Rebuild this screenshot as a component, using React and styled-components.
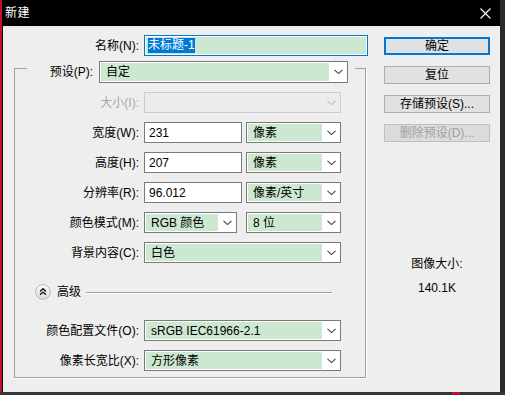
import React from "react";
import styled, { createGlobalStyle } from "styled-components";

const Global = createGlobalStyle`
  html, body { margin: 0; padding: 0; background: #2b2b2b; overflow: hidden; }
  * { box-sizing: border-box; }
`;

const FONT = `"Liberation Sans", "Noto Sans CJK SC", sans-serif`;

const Screen = styled.div`
  width: 505px;
  height: 395px;
  display: flex;
  flex-direction: column;
  font-family: ${FONT};
  font-size: 12px;
  line-height: 16px;
  color: #000;
`;

const MainRow = styled.div`
  flex: 1;
  display: flex;
  min-height: 0;
`;

const RedEdge = styled.div`
  width: 2px;
  background: #c4102d;
`;

const RightEdge = styled.div`
  flex: 1;
  background: #2b2b2b;
`;

const Taskbar = styled.div`
  height: 3px;
  background: #353535;
  display: flex;
  justify-content: flex-end;
  padding-right: 45px;
`;

const TaskMark = styled.div`
  width: 8px;
  background: #c4102d;
`;

const Window = styled.div`
  width: 498px;
  display: flex;
  flex-direction: column;
  border-left: 1px solid #000;
`;

const TitleBar = styled.div`
  height: 26px;
  background: #000;
  display: flex;
  align-items: center;
  justify-content: space-between;
  padding: 0 9px 0 2px;
  color: #fff;
`;

const TitleText = styled.span`
  font-size: 12px;
  letter-spacing: 0.5px;
`;

const Body = styled.div`
  flex: 1;
  background: #eeeeee;
  display: flex;
`;

const LeftCol = styled.div`
  width: 381px;
  padding-top: 9px;
  display: flex;
  flex-direction: column;
`;

const NameRow = styled.div`
  display: grid;
  grid-template-columns: 136px 224px;
  column-gap: 5px;
  align-items: center;
  height: 21px;
`;

const Label = styled.span`
  text-align: right;
  white-space: nowrap;
  color: ${(p) => (p.$disabled ? "#a8a8a8" : "#000")};
`;

const NameInput = styled.div`
  height: 21px;
  border: 1px solid #0078d7;
  padding: 1px;
  background: #fff;
  display: flex;
`;

const NameFill = styled.div`
  flex: 1;
  background: #cde8d0;
  padding-left: 2px;
  display: flex;
  align-items: center;
`;

const Selected = styled.span`
  background: #0078d7;
  color: #fff;
  line-height: 15px;
`;

const GroupBox = styled.div`
  margin: 12px 0 0 11px;
  width: 352px;
  border: 1px solid #a0a0a0;
  border-top: none;
  padding-bottom: 6px;
  box-shadow: 1px 1px 0 #fff;
  display: flex;
  flex-direction: column;
`;

const Header = styled.div`
  height: 22px;
  margin-top: -7px;
  display: flex;
  align-items: center;
`;

const HeaderLine = styled.div`
  align-self: flex-start;
  margin-top: 7px;
  height: 1px;
  background: #a0a0a0;
  width: ${(p) => (p.$w ? `${p.$w}px` : "auto")};
  flex: ${(p) => (p.$w ? "none" : "1")};
`;

const HeaderLabel = styled(Label)`
  width: 66px;
  margin-right: 6px;
`;

const HeaderGap = styled.div`
  width: 7px;
`;

const Fields = styled.div`
  display: flex;
  flex-direction: column;
  gap: 9px;
  margin-top: ${(p) => p.$mt || 0}px;
`;

const FieldRow = styled.div`
  display: grid;
  grid-template-columns: 124px auto;
  column-gap: 5px;
  align-items: center;
  height: 21px;
`;

const Pair = styled.div`
  display: flex;
  gap: ${(p) => p.$gap}px;
`;

const TextBox = styled.div`
  width: ${(p) => p.$w}px;
  height: 21px;
  border: 1px solid #7a7a7a;
  background: #fff;
  padding-left: 4px;
  display: flex;
  align-items: center;
`;

const Select = styled.div`
  width: ${(p) => p.$w}px;
  height: ${(p) => p.$h || 21}px;
  border: 1px solid ${(p) => (p.$disabled ? "#cccccc" : "#7a7a7a")};
  background: ${(p) => (p.$disabled ? "#ececec" : "#fff")};
  display: flex;
`;

const SelectValue = styled.div`
  flex: 1;
  margin: 1px 0 1px 1px;
  padding-left: 5px;
  background: ${(p) => (p.$disabled ? "#ececec" : "#cde8d0")};
  display: flex;
  align-items: center;
  white-space: nowrap;
`;

const SelectArrow = styled.div`
  width: 18px;
  display: flex;
  align-items: center;
  justify-content: center;
`;

const AdvancedRow = styled.div`
  height: 16px;
  margin-top: 21px;
  padding-left: 20px;
  display: flex;
  align-items: center;
`;

const AdvText = styled.span`
  margin-left: 6px;
`;

const AdvLine = styled.div`
  width: 246px;
  margin-left: 5px;
  height: 1px;
  background: #a0a0a0;
  box-shadow: 0 1px 0 #fff;
`;

const RightCol = styled.div`
  width: 106px;
  padding-top: 11px;
  display: flex;
  flex-direction: column;
`;

const Buttons = styled.div`
  display: flex;
  flex-direction: column;
  gap: 11px;
`;

const Button = styled.div`
  height: 18px;
  background: ${(p) => (p.$disabled ? "#dcdcdc" : "#e1e1e1")};
  border: ${(p) =>
    p.$primary ? "2px solid #0078d7" : `1px solid ${p.$disabled ? "#bfbfbf" : "#adadad"}`};
  color: ${(p) => (p.$disabled ? "#a0a0a0" : "#000")};
  display: flex;
  align-items: center;
  justify-content: center;
  white-space: nowrap;
`;

const Info = styled.div`
  margin-top: 114px;
  display: flex;
  flex-direction: column;
  align-items: center;
  gap: 8px;
`;

function Chevron({ disabled }) {
  return (
    <svg width="9" height="6" viewBox="0 0 9 6">
      <path
        d="M0.5 0.8 L4.5 4.6 L8.5 0.8"
        fill="none"
        stroke={disabled ? "#bdbdbd" : "#404040"}
        strokeWidth="1.1"
      />
    </svg>
  );
}

function Dropdown({ w, h, value, disabled }) {
  return (
    <Select $w={w} $h={h} $disabled={disabled}>
      <SelectValue $disabled={disabled}>{value}</SelectValue>
      <SelectArrow>
        <Chevron disabled={disabled} />
      </SelectArrow>
    </Select>
  );
}

function CloseIcon() {
  return (
    <svg width="11" height="11" viewBox="0 0 11 11">
      <path d="M0.5 0.5 L10.5 10.5 M10.5 0.5 L0.5 10.5" stroke="#fff" strokeWidth="1.1" />
    </svg>
  );
}

function AdvIcon() {
  return (
    <svg width="16" height="16" viewBox="0 0 16 16">
      <defs>
        <linearGradient id="advg" x1="0" y1="0" x2="0" y2="1">
          <stop offset="0" stopColor="#ffffff" />
          <stop offset="1" stopColor="#dedede" />
        </linearGradient>
      </defs>
      <circle cx="8" cy="8" r="7.3" fill="url(#advg)" stroke="#b5b5b5" strokeWidth="1" />
      <path d="M5 7.5 L8 4.8 L11 7.5 M5 10.8 L8 8.1 L11 10.8" fill="none" stroke="#111" strokeWidth="1.4" />
    </svg>
  );
}

export default function App() {
  return (
    <Screen>
      <Global />
      <MainRow>
        <RedEdge />
        <Window>
          <TitleBar>
            <TitleText>新建</TitleText>
            <CloseIcon />
          </TitleBar>
          <Body>
            <LeftCol>
              <NameRow>
                <Label>名称(N):</Label>
                <NameInput>
                  <NameFill>
                    <Selected>未标题-1</Selected>
                  </NameFill>
                </NameInput>
              </NameRow>
              <GroupBox>
                <Header>
                  <HeaderLine $w={12} />
                  <HeaderLabel>预设(P):</HeaderLabel>
                  <Dropdown w={249} h={22} value="自定" />
                  <HeaderGap />
                  <HeaderLine />
                </Header>
                <Fields $mt={9}>
                  <FieldRow>
                    <Label $disabled>大小(I):</Label>
                    <Dropdown w={197} value="" disabled />
                  </FieldRow>
                  <FieldRow>
                    <Label>宽度(W):</Label>
                    <Pair $gap={4}>
                      <TextBox $w={98}>231</TextBox>
                      <Dropdown w={95} value="像素" />
                    </Pair>
                  </FieldRow>
                  <FieldRow>
                    <Label>高度(H):</Label>
                    <Pair $gap={4}>
                      <TextBox $w={98}>207</TextBox>
                      <Dropdown w={95} value="像素" />
                    </Pair>
                  </FieldRow>
                  <FieldRow>
                    <Label>分辨率(R):</Label>
                    <Pair $gap={4}>
                      <TextBox $w={98}>96.012</TextBox>
                      <Dropdown w={95} value="像素/英寸" />
                    </Pair>
                  </FieldRow>
                  <FieldRow>
                    <Label>颜色模式(M):</Label>
                    <Pair $gap={9}>
                      <Dropdown w={93} value="RGB 颜色" />
                      <Dropdown w={95} value="8 位" />
                    </Pair>
                  </FieldRow>
                  <FieldRow>
                    <Label>背景内容(C):</Label>
                    <Dropdown w={197} value="白色" />
                  </FieldRow>
                </Fields>
                <AdvancedRow>
                  <AdvIcon />
                  <AdvText>高级</AdvText>
                  <AdvLine />
                </AdvancedRow>
                <Fields $mt={20}>
                  <FieldRow>
                    <Label>颜色配置文件(O):</Label>
                    <Dropdown w={197} value="sRGB IEC61966-2.1" />
                  </FieldRow>
                  <FieldRow>
                    <Label>像素长宽比(X):</Label>
                    <Dropdown w={197} value="方形像素" />
                  </FieldRow>
                </Fields>
              </GroupBox>
            </LeftCol>
            <RightCol>
              <Buttons>
                <Button $primary>确定</Button>
                <Button>复位</Button>
                <Button>存储预设(S)...</Button>
                <Button $disabled>删除预设(D)...</Button>
              </Buttons>
              <Info>
                <span>图像大小:</span>
                <span>140.1K</span>
              </Info>
            </RightCol>
          </Body>
        </Window>
        <RightEdge />
      </MainRow>
      <Taskbar>
        <TaskMark />
      </Taskbar>
    </Screen>
  );
}
